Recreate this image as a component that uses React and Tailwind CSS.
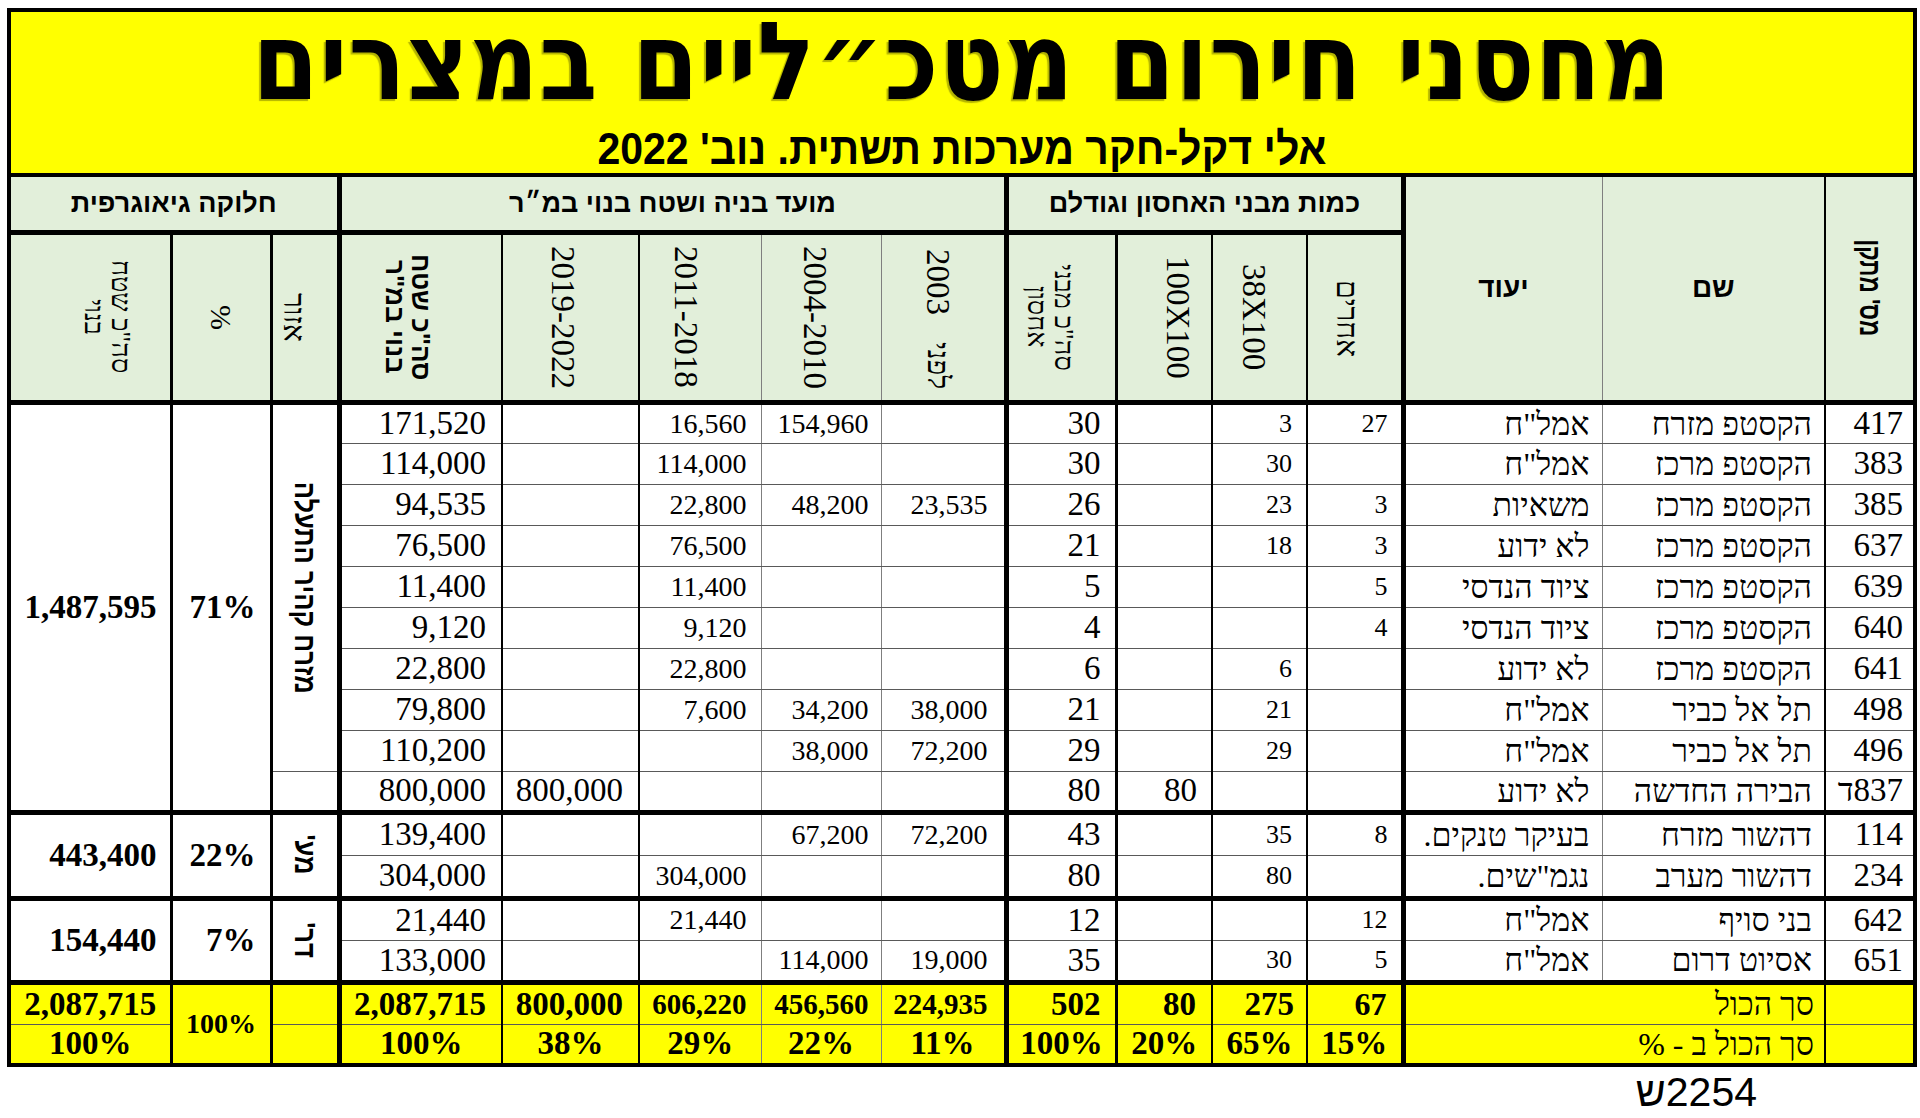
import React from 'react'

const serif = "font-['Liberation_Serif',serif]"
const sans = "font-['Liberation_Sans',sans-serif]"

// column borders, in DOM order (the table is rtl, so c0 is the rightmost column)
const colBorder = [
  'border-l-2 border-r-4 border-black',
  'border-l border-black border-l-[#7f7f7f]',
  'border-l-[5px] border-black',
  'border-l-2 border-black',
  'border-l-2 border-black',
  'border-l-[3px] border-black',
  'border-l-[5px] border-black',
  'border-l border-black border-l-[#7f7f7f]',
  'border-l border-black border-l-[#7f7f7f]',
  'border-l-2 border-black',
  'border-l-2 border-black',
  'border-l-[5px] border-black',
  'border-l-[3px] border-black',
  'border-l-[3px] border-black',
  'border-l-4 border-black',
]

const colText = [
  'text-[33px] pr-[10px]',
  'text-[32px] pr-[12px]',
  'text-[32px] pr-[12px]',
  'text-[26px] pr-[13px]',
  'text-[26px] pr-[14px]',
  'text-[33px] pr-[14px]',
  'text-[33px] pr-[14px]',
  'text-[28px] pr-[16px]',
  'text-[28px] pr-[12px]',
  'text-[28px] pr-[14px]',
  'text-[33px] pr-[15px]',
  'text-[33px] pr-[15px]',
]

const groups = [
  {
    h: 'h-[41px]',
    area: 'מזרח קהיר התעלה',
    areaSpan: 9,
    pct: '71%',
    total: '1,487,595',
    rows: [
      ['417', 'הקסטפ מזרח', 'אמל"ח', '27', '3', '', '30', '', '154,960', '16,560', '', '171,520'],
      ['383', 'הקסטפ מרכז', 'אמל"ח', '', '30', '', '30', '', '', '114,000', '', '114,000'],
      ['385', 'הקסטפ מרכז', 'משאיות', '3', '23', '', '26', '23,535', '48,200', '22,800', '', '94,535'],
      ['637', 'הקסטפ מרכז', 'לא ידוע', '3', '18', '', '21', '', '', '76,500', '', '76,500'],
      ['639', 'הקסטפ מרכז', 'ציוד הנדסי', '5', '', '', '5', '', '', '11,400', '', '11,400'],
      ['640', 'הקסטפ מרכז', 'ציוד הנדסי', '4', '', '', '4', '', '', '9,120', '', '9,120'],
      ['641', 'הקסטפ מרכז', 'לא ידוע', '', '6', '', '6', '', '', '22,800', '', '22,800'],
      ['498', 'תל אל כביר', 'אמל"ח', '', '21', '', '21', '38,000', '34,200', '7,600', '', '79,800'],
      ['496', 'תל אל כביר', 'אמל"ח', '', '29', '', '29', '72,200', '38,000', '', '', '110,200'],
      ['837ד', 'הבירה החדשה', 'לא ידוע', '', '', '80', '80', '', '', '', '800,000', '800,000'],
    ],
  },
  {
    h: 'h-[43px]',
    area: "מע'",
    pct: '22%',
    total: '443,400',
    rows: [
      ['114', 'דהשור מזרח', 'בעיקר טנקים.', '8', '35', '', '43', '72,200', '67,200', '', '', '139,400'],
      ['234', 'דהשור מערב', 'נגמ"שים.', '', '80', '', '80', '', '', '304,000', '', '304,000'],
    ],
  },
  {
    h: 'h-[42px]',
    area: "דר'",
    pct: '7%',
    total: '154,440',
    rows: [
      ['642', 'בני סויף', 'אמל"ח', '12', '', '', '12', '', '', '21,440', '', '21,440'],
      ['651', 'אסיוט דרום', 'אמל"ח', '5', '30', '', '35', '19,000', '114,000', '', '', '133,000'],
    ],
  },
]

const totals = ['67', '275', '80', '502', '224,935', '456,560', '606,220', '800,000', '2,087,715']
const totalSize = ['text-[32px] pr-[14px]', 'text-[33px] pr-[12px]', 'text-[33px] pr-[15px]', 'text-[33px] pr-[14px]', 'text-[29px] pr-[16px]', 'text-[29px] pr-[12px]', 'text-[29px] pr-[14px]', 'text-[33px] pr-[15px]', 'text-[33px] pr-[15px]']
const percents = ['15%', '65%', '20%', '100%', '11%', '22%', '29%', '38%', '100%']

function V({ children, className = '' }) {
  return (
    <div className={`h-fit w-fit whitespace-nowrap text-center leading-none [writing-mode:vertical-rl] ${className}`}>
      {children}
    </div>
  )
}

function Head({ i, children, pad = '' }) {
  return (
    <td className={`${colBorder[i]} border-b-[5px] border-b-black p-0 align-middle`}>
      <div className={`flex h-[165px] flex-col items-center justify-center ${pad}`}>{children}</div>
    </td>
  )
}

function Group({ g }) {
  return g.rows.map((row, r) => {
    const last = r === g.rows.length - 1
    const bottom = last ? 'border-b-[5px] border-b-black' : 'border-b border-b-[#595959]'
    const span = g.areaSpan || g.rows.length
    return (
      <tr key={r} className={g.h}>
        {row.map((v, i) => (
          <td key={i} className={`${colBorder[i]} ${bottom} ${colText[i]} whitespace-nowrap text-right align-middle leading-none`}>
            {v}
          </td>
        ))}
        {r === 0 && (
          <td rowSpan={span} className={`${colBorder[12]} ${span < g.rows.length ? 'border-b border-b-[#595959]' : 'border-b-[5px] border-b-black'} align-middle`}>
            <div className="flex justify-center">
              <V className={`${sans} text-[30px] font-bold scale-y-[0.85]`}>{g.area}</V>
            </div>
          </td>
        )}
        {span < g.rows.length && r === span && (
          <td className={`${colBorder[12]} border-b-[5px] border-b-black`}></td>
        )}
        {r === 0 && (
          <td rowSpan={g.rows.length} className={`${colBorder[13]} border-b-[5px] border-b-black pr-[14px] text-right align-middle text-[33px] font-bold leading-none`}>
            {g.pct}
          </td>
        )}
        {r === 0 && (
          <td rowSpan={g.rows.length} className={`${colBorder[14]} border-b-[5px] border-b-black pr-[13px] text-right align-middle text-[33px] font-bold leading-none`}>
            {g.total}
          </td>
        )}
      </tr>
    )
  })
}

export default function App() {
  return (
    <div className={`min-h-screen bg-white text-black ${serif}`}>
      <table dir="rtl" className="ml-[7px] mt-[8px] w-[1906px] table-fixed border-collapse">
        <colgroup>
          <col className="w-[90px]" />
          <col className="w-[223px]" />
          <col className="w-[199px]" />
          <col className="w-[96px]" />
          <col className="w-[95px]" />
          <col className="w-[96px]" />
          <col className="w-[110px]" />
          <col className="w-[125px]" />
          <col className="w-[120px]" />
          <col className="w-[122px]" />
          <col className="w-[137px]" />
          <col className="w-[163px]" />
          <col className="w-[68px]" />
          <col className="w-[100px]" />
          <col className="w-[162px]" />
        </colgroup>
        <tbody>
          <tr className="h-[165px]">
            <td colSpan={15} className="border-4 border-black bg-[#ffff00] p-0 align-top">
              <div className="flex flex-col items-center pt-[2px]">
                <div className="font-['DejaVu_Sans',sans-serif] text-[95px] font-bold leading-none tracking-[1px] scale-y-[1.14] [text-shadow:-2px_2px_1px_rgba(0,0,0,0.3)]">
                  מחסני חירום מטכ״ליים במצרים
                </div>
                <div className={`${sans} mt-[20px] text-[41px] font-bold leading-none scale-y-[1.1]`}>
                  אלי דקל-חקר מערכות תשתית. נוב' 2022
                </div>
              </div>
            </td>
          </tr>

          <tr className="h-[57px] bg-[#e2efda]">
            <td rowSpan={2} className={`${colBorder[0]} border-b-[5px] border-b-black p-0 align-middle`}>
              <div className="flex justify-center">
                <V className={`${sans} text-[30px] font-bold scale-y-[0.75]`}>מס' מתקן</V>
              </div>
            </td>
            <td rowSpan={2} className={`${colBorder[1]} border-b-[5px] border-b-black ${sans} text-center align-middle text-[28px] font-bold`}>
              שם
            </td>
            <td rowSpan={2} className={`${colBorder[2]} border-b-[5px] border-b-black ${sans} text-center align-middle text-[28px] font-bold`}>
              יעוד
            </td>
            <td colSpan={4} className={`${colBorder[6]} border-b-[5px] border-b-black ${sans} text-center align-middle text-[27px] font-bold`}>
              כמות מבני האחסון וגודלם
            </td>
            <td colSpan={5} className={`${colBorder[11]} border-b-[5px] border-b-black ${sans} text-center align-middle text-[27px] font-bold`}>
              מועד בניה ושטח בנוי במ״ר
            </td>
            <td colSpan={3} className={`${colBorder[14]} border-b-[5px] border-b-black ${sans} text-center align-middle text-[27px] font-bold`}>
              חלוקה גיאוגרפית
            </td>
          </tr>

          <tr className="h-[170px] bg-[#e2efda]">
            <Head i={3} pad="pr-[14px] pt-[4px]">
              <V className="text-[30px]">אחרים</V>
            </Head>
            <Head i={4} pad="pr-[12px]">
              <V className="text-[33px]">38X100</V>
            </Head>
            <Head i={5} pad="pl-[26px]">
              <V className="text-[33px]">100X100</V>
            </Head>
            <Head i={6} pad="pr-[24px]">
              <V className="text-[27px] leading-[34px]">
                סה"כ מבני
                <br />
                אחסון
              </V>
            </Head>
            <td className={`${colBorder[7]} border-b-[5px] border-b-black p-0 align-top`}>
              <div className="flex h-[165px] flex-col items-center justify-between pb-[10px] pr-[10px] pt-[14px]">
                <V className="text-[33px]">2003</V>
                <V className="text-[30px]">לפני</V>
              </div>
            </td>
            <Head i={8} pad="pr-[14px]">
              <V className="text-[33px]">2004-2010</V>
            </Head>
            <Head i={9} pad="pr-[30px]">
              <V className="text-[33px]">2011-2018</V>
            </Head>
            <Head i={10} pad="pr-[16px]">
              <V className="text-[33px]">2019-2022</V>
            </Head>
            <Head i={11} pad="pr-[26px]">
              <V className={`${sans} text-[26px] font-bold leading-[28px]`}>
                סה"כ שטח
                <br />
                בנוי במ"ר
              </V>
            </Head>
            <Head i={12} pad="pr-[22px]">
              <V className="text-[30px]">אזור</V>
            </Head>
            <Head i={13}>
              <V className="text-[30px]">%</V>
            </Head>
            <Head i={14} pad="pl-[34px]">
              <V className="text-[27px] leading-[34px]">
                סה"כ שטח
                <br />
                בנוי
              </V>
            </Head>
          </tr>

          {groups.map((g, k) => (
            <Group key={k} g={g} />
          ))}

          <tr className="h-[42px] bg-[#ffff00]">
            <td className={`${colBorder[0]} border-b border-b-[#595959]`}></td>
            <td colSpan={2} className={`${colBorder[2]} border-b border-b-[#595959] pr-[10px] text-right align-middle text-[32px] leading-none`}>
              סך הכול
            </td>
            {totals.map((v, j) => (
              <td key={j} className={`${colBorder[j + 3]} border-b border-b-[#595959] ${totalSize[j]} whitespace-nowrap text-right align-middle font-bold leading-none`}>
                {v}
              </td>
            ))}
            <td className={`${colBorder[12]} border-b border-b-[#595959]`}></td>
            <td rowSpan={2} className={`${colBorder[13]} border-b-4 border-b-black text-center align-middle text-[28px] font-bold leading-none`}>
              100%
            </td>
            <td className={`${colBorder[14]} border-b border-b-[#595959] text-center align-middle text-[33px] font-bold leading-none`}>
              2,087,715
            </td>
          </tr>
          <tr className="h-[41px] bg-[#ffff00]">
            <td className={`${colBorder[0]} border-b-4 border-b-black`}></td>
            <td colSpan={2} className={`${colBorder[2]} border-b-4 border-b-black pr-[10px] text-right align-middle text-[32px] leading-none`}>
              סך הכול ב - %
            </td>
            {percents.map((v, j) => (
              <td key={j} className={`${colBorder[j + 3]} border-b-4 border-b-black text-center align-middle text-[33px] font-bold leading-none`}>
                {v}
              </td>
            ))}
            <td className={`${colBorder[12]} border-b-4 border-b-black`}></td>
            <td className={`${colBorder[14]} border-b-4 border-b-black text-center align-middle text-[33px] font-bold leading-none`}>
              100%
            </td>
          </tr>
        </tbody>
      </table>

      <div className="flex justify-end pr-[163px] pt-[5px]">
        <span dir="rtl" className={`${sans} text-[41px] leading-none`}>
          2254ש
        </span>
      </div>
    </div>
  )
}
